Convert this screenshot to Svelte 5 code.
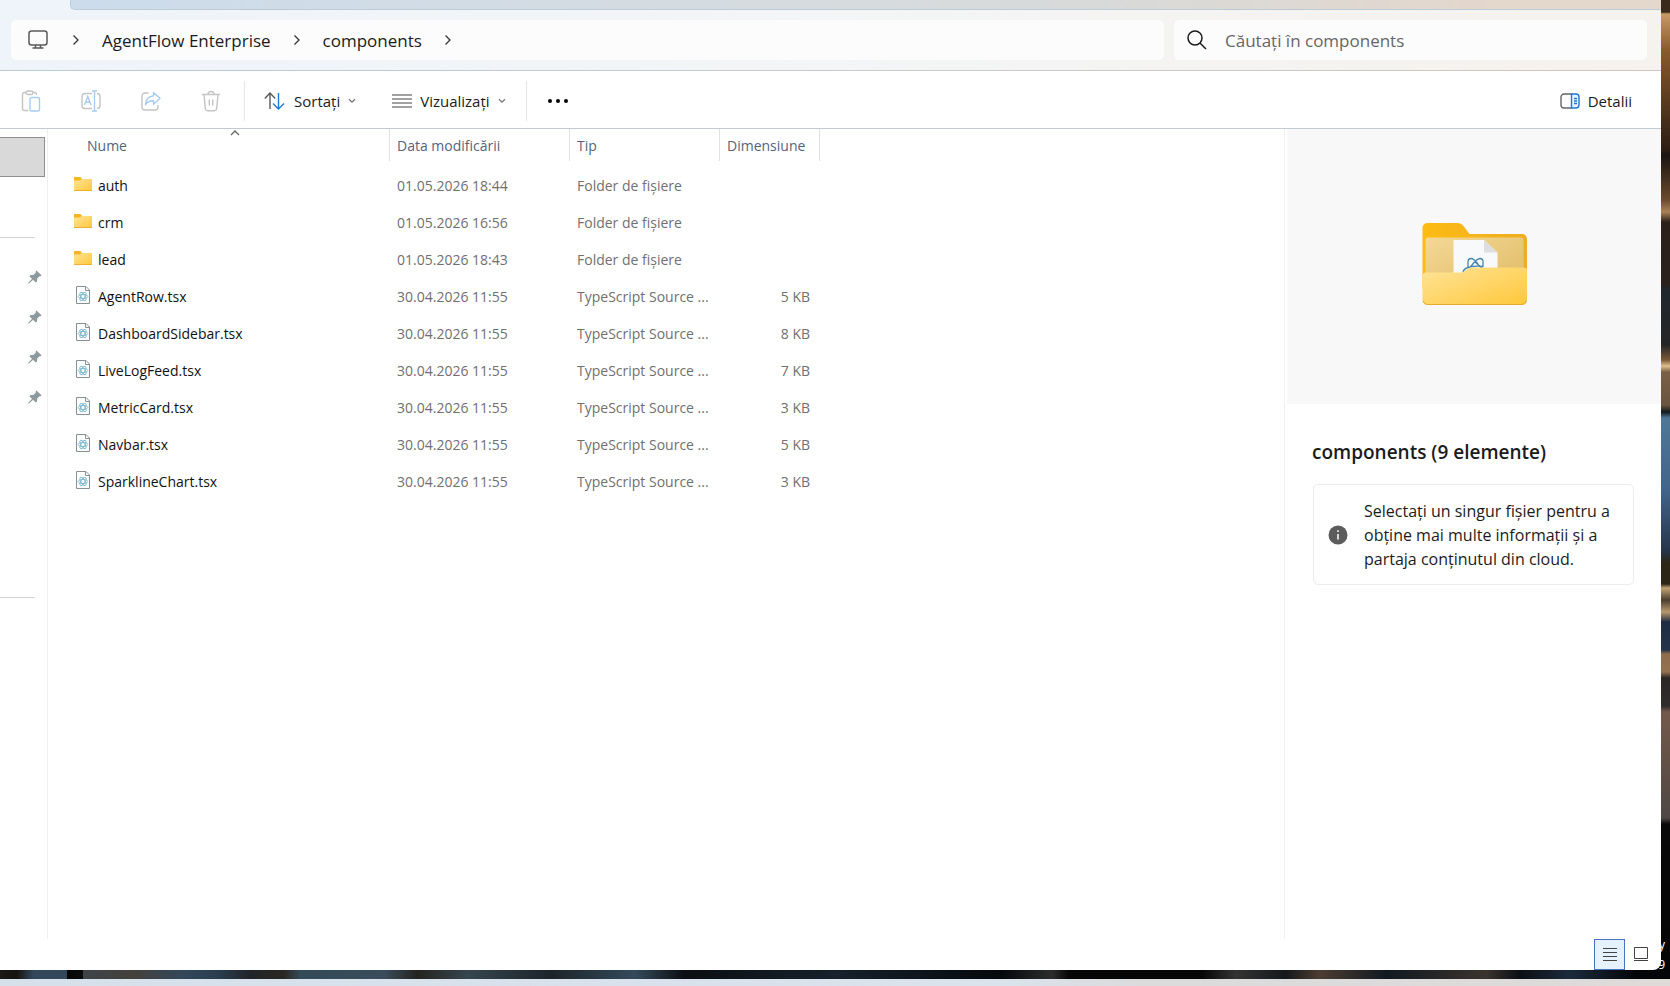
<script lang="ts">
    interface Entry {
        name: string;
        modified: string;
        size?: string;
    }

    const crumbs = ['AgentFlow Enterprise', 'components'];

    const entries: Entry[] = [
        { name: 'auth', modified: '01.05.2026 18:44' },
        { name: 'crm', modified: '01.05.2026 16:56' },
        { name: 'lead', modified: '01.05.2026 18:43' },
        { name: 'AgentRow.tsx', modified: '30.04.2026 11:55', size: '5 KB' },
        { name: 'DashboardSidebar.tsx', modified: '30.04.2026 11:55', size: '8 KB' },
        { name: 'LiveLogFeed.tsx', modified: '30.04.2026 11:55', size: '7 KB' },
        { name: 'MetricCard.tsx', modified: '30.04.2026 11:55', size: '3 KB' },
        { name: 'Navbar.tsx', modified: '30.04.2026 11:55', size: '5 KB' },
        { name: 'SparklineChart.tsx', modified: '30.04.2026 11:55', size: '3 KB' },
    ];

    const pins = [1, 2, 3, 4];

    let search = $state('');
    let view = $state('details');
    let showDetails = $state(true);
</script>

{#snippet chevron()}
    <svg class="chevron" width="8" height="12" viewBox="0 0 8 12"><path d="M1.5 1.5 6 6 1.5 10.5" /></svg>
{/snippet}

{#snippet caret()}
    <svg class="caret" width="8" height="6" viewBox="0 0 8 6"><path d="M1 1.2 4 4.2 7 1.2" /></svg>
{/snippet}

<div class="desktop">
    <div class="window">
        <div class="titlebar"><div class="tabs"></div></div>

        <header class="address-row">
            <nav class="address">
                <button class="crumb-icon" aria-label="Acest PC">
                    <svg width="20" height="20" viewBox="0 0 20 20" fill="none" stroke="#5a5a5a" stroke-width="1.5">
                        <rect x="1" y="1" width="18" height="14" rx="2.5" />
                        <path d="M7.5 15v3M12.5 15v3M4.5 18h11" />
                    </svg>
                </button>
                {@render chevron()}
                {#each crumbs as crumb}
                    <a class="crumb" href="#{crumb}">{crumb}</a>
                    {@render chevron()}
                {/each}
            </nav>
            <label class="search">
                <svg width="20" height="20" viewBox="0 0 20 20" fill="none" stroke="#1b1b1b" stroke-width="1.5">
                    <circle cx="8" cy="8" r="7" />
                    <path d="m13 13 6 6" />
                </svg>
                <input type="text" bind:value={search} placeholder="Căutați în components" aria-label="Căutați în components" />
            </label>
        </header>

        <div class="toolbar">
            <div class="actions">
                <button aria-label="Lipire" disabled>
                    <svg width="20" height="22" viewBox="0 0 20 22" fill="none" stroke="#c4c4c4" stroke-width="1.4">
                        <path d="M7 20.5H3.5a2 2 0 0 1-2-2v-14a2 2 0 0 1 2-2H5M12 2.5h1.5a2 2 0 0 1 2 2V5" />
                        <rect x="5" y="1" width="7" height="3.5" rx="1.7" />
                        <rect x="9" y="7.5" width="9.5" height="13.5" rx="1.8" stroke="#a5cdf2" />
                    </svg>
                </button>
                <button aria-label="Redenumire" disabled>
                    <svg width="20" height="22" viewBox="0 0 20 22" fill="none" stroke="#c4c4c4" stroke-width="1.4">
                        <path d="M11 18.500H4a3 3 0 0 1-3-3v-9a3 3 0 0 1 3-3h7M16 3.500a3 3 0 0 1 3 3v9a3 3 0 0 1-3 3" />
                        <path d="m3.500 15 3.200-8.500L10 15M4.600 12.200h4.200M11 1h5M11 21h5M13.500 1v20" stroke="#a5cdf2" />
                    </svg>
                </button>
                <button aria-label="Partajare" disabled>
                    <svg width="20" height="22" viewBox="0 0 20 22" fill="none" stroke="#c4c4c4" stroke-width="1.4">
                        <path d="M7.500 3H4a3 3 0 0 0-3 3v11a3 3 0 0 0 3 3h10a3 3 0 0 0 3-3v-2" />
                        <path d="M12.500 2.500 19 8.300l-6.500 5.900v-3.500c-4 0-6.500 1-8 4 .3-5.500 3-8.500 8-8.800z" stroke="#a5cdf2" stroke-linejoin="round" />
                    </svg>
                </button>
                <button aria-label="Ștergere" disabled>
                    <svg width="20" height="22" viewBox="0 0 20 22" fill="none" stroke="#c4c4c4" stroke-width="1.4">
                        <path d="M1 4.500h18M7 4.500a3 3 0 0 1 6 0M3 4.500l1.300 14a2.500 2.500 0 0 0 2.400 2.200h6.600a2.500 2.500 0 0 0 2.400-2.200L17 4.500M8.300 9.500v6M11.700 9.500v6" />
                    </svg>
                </button>
            </div>
            <div class="menus">
                <button class="menu">
                    <svg width="22" height="18" viewBox="0 0 22 18" fill="none" stroke-width="1.4">
                        <path d="M6 17V1M.8 6.500 6 1l5.200 5.500" stroke="#5a5a5a" />
                        <path d="M14.500 1v16M9 11.500l5.500 5.500 5.500-5.500" stroke="#1f78d1" />
                    </svg>
                    Sortați {@render caret()}
                </button>
                <button class="menu">
                    <svg width="20" height="14" viewBox="0 0 20 14" stroke="#444" stroke-width="1.2">
                        <path d="M0 1h20M0 5h20M0 9h20M0 13h20" />
                    </svg>
                    Vizualizați {@render caret()}
                </button>
            </div>
            <button class="more" aria-label="Mai multe">
                <svg width="22" height="6" viewBox="0 0 22 6"><circle cx="3" cy="3" r="2" /><circle cx="11" cy="3" r="2" /><circle cx="19" cy="3" r="2" /></svg>
            </button>
            <button class="menu details-toggle" onclick={() => (showDetails = !showDetails)}>
                <svg width="20" height="16" viewBox="0 0 20 16" fill="none" stroke-width="1.4">
                    <path d="M11.500 1H4a3 3 0 0 0-3 3v8a3 3 0 0 0 3 3h7.500" stroke="#666" />
                    <path d="M11.500 1H16a3 3 0 0 1 3 3v8a3 3 0 0 1-3 3h-4.500zM14 5.500h3M14 8h3M14 10.500h3" fill="#e8f3fd" stroke="#1f78d1" />
                </svg>
                Detalii
            </button>
        </div>

        <div class="content">
            <aside class="sidebar">
                <div class="selected"></div>
                <hr />
                <ul class="pins">
                    {#each pins as pin (pin)}
                        <li>
                            <svg width="14" height="14" viewBox="0 0 14 14" fill="#8d999d">
                                <path d="M8.500.5 13.500 5.300 12.700 6.300 11.500 6.200 9.200 8.600 9 11.500 7.800 12.500 5 9.700 1 13.500.3 13.600.4 12.800 4 8.800 1.500 6.200 2.500 5 5.400 4.900 7.800 2.500 7.700 1.300z" />
                            </svg>
                        </li>
                    {/each}
                </ul>
                <hr class="lower" />
            </aside>

            <main class="files">
                <svg class="sort-mark" width="10" height="6" viewBox="0 0 10 6"><path d="M1 5 5 1 9 5" /></svg>
                <table>
                    <thead>
                        <tr>
                            <th class="name"><span>Nume</span></th>
                            <th class="modified"><span>Data modificării</span></th>
                            <th class="type"><span>Tip</span></th>
                            <th class="size"><span>Dimensiune</span></th>
                        </tr>
                    </thead>
                    <tbody>
                        {#each entries as entry (entry.name)}
                            <tr>
                                <td class="name">
                                    <div class="entry">
                                        {#if entry.size}
                                            <svg width="20" height="20" viewBox="0 0 20 20" fill="none">
                                                <path d="M3.500 1.500h9.500l3.500 3.500v13.500h-13z" fill="#fcfdfd" stroke="#8a8f93" />
                                                <path d="M12.500 1.500v4h4" stroke="#8a8f93" />
                                                <g stroke="#6fafc9" stroke-width=".8">
                                                    <ellipse cx="10" cy="11.500" rx="4.800" ry="2" />
                                                    <ellipse cx="10" cy="11.500" rx="4.800" ry="2" transform="rotate(60 10 11.500)" />
                                                    <ellipse cx="10" cy="11.500" rx="4.800" ry="2" transform="rotate(120 10 11.500)" />
                                                </g>
                                            </svg>
                                        {:else}
                                            <svg width="20" height="20" viewBox="0 0 20 20">
                                                <path d="M1 3.500q0-.5.500-.5h6l1.500 2h9.500q.5 0 .5.500V9H1z" fill="#f8b51f" />
                                                <path d="M1 6.500h6L8.500 5h10q.5 0 .5.500v11q0 .5-.5.500h-17q-.5 0-.5-.5z" fill="url(#row-folder)" />
                                                <path d="M1 16.500h18" stroke="#eeb033" />
                                            </svg>
                                        {/if}
                                        {entry.name}
                                    </div>
                                </td>
                                <td>{entry.modified}</td>
                                <td>{entry.size ? 'TypeScript Source ...' : 'Folder de fișiere'}</td>
                                <td class="size">{entry.size ?? ''}</td>
                            </tr>
                        {/each}
                    </tbody>
                </table>
            </main>

            {#if showDetails}
                <aside class="details">
                    <div class="preview">
                        <svg width="106" height="84" viewBox="0 0 106 84">
                            <defs>
                                <linearGradient id="row-folder" x1="0" y1="0" x2="1" y2="1">
                                    <stop offset="0" stop-color="#ffe398" />
                                    <stop offset="1" stop-color="#ffc83a" />
                                </linearGradient>
                                <linearGradient id="folder-back" x1="0" y1="0" x2="1" y2="0">
                                    <stop offset="0" stop-color="#fdbb14" />
                                    <stop offset="1" stop-color="#eeae20" />
                                </linearGradient>
                                <linearGradient id="folder-inner" x1="0" y1="0" x2="1" y2="1">
                                    <stop offset="0" stop-color="#f4d895" />
                                    <stop offset="1" stop-color="#dfbb66" />
                                </linearGradient>
                            </defs>
                            <path d="M.5 6a5 5 0 0 1 5-5H35q4 0 6.500 3l6 8H100a5 5 0 0 1 5 5v50H.5z" fill="url(#folder-back)" />
                            <rect x="3.500" y="15.500" width="98" height="50" rx="2.500" fill="url(#folder-inner)" />
                            <path d="M31.500 18H62l13.500 12.500V60h-44z" fill="#f7f9fb" />
                            <path d="M62 18v12.500h13.500z" fill="#dedede" />
                            <path
                                d="M46 45v-5q0-3.500 3-3.500 3 0 7 5.500M61 45v-5q0-3.500-3-3.500-3 0-8 6.500l-3 3M53 40l7 6M41 50q1-4.500 9-5.500 6-.8 11 0"
                                fill="none"
                                stroke="#4487ad"
                                stroke-width="1.3"
                            />
                            <path d="M.5 54q0-3.500 3.500-3.500h34q3.500 0 6-2.500t6-2.500H102q3 0 3 3V78a5 5 0 0 1-5 5H5.500a5 5 0 0 1-5-5z" fill="url(#row-folder)" />
                            <path d="M1 79q1 3.500 4.500 3.500H100q3.500 0 4.500-3.500" fill="none" stroke="#e6a92f" />
                        </svg>
                    </div>
                    <h2>components (9 elemente)</h2>
                    <div class="notice">
                        <svg width="20" height="20" viewBox="0 0 20 20">
                            <circle cx="10" cy="10" r="9.500" fill="#5c5c5c" />
                            <path d="M10 9v5.500M10 5.300v1.600" stroke="#fff" stroke-width="1.500" />
                        </svg>
                        <p>Selectați un singur fișier pentru a obține mai multe informații și a partaja conținutul din cloud.</p>
                    </div>
                </aside>
            {/if}
        </div>

        <footer class="statusbar">
            <button class:active={view === 'details'} aria-label="Detalii" onclick={() => (view = 'details')}>
                <svg width="16" height="14" viewBox="0 0 16 14"><path d="M1 .5h14M1 4.500h14M1 8.500h14M1 12.500h14" /></svg>
            </button>
            <button class:active={view === 'icons'} aria-label="Pictograme mari" onclick={() => (view = 'icons')}>
                <svg width="16" height="16" viewBox="0 0 16 16"><path d="M1.500.5h13v11h-13zM1 13.500h14" /></svg>
            </button>
        </footer>
    </div>

    <div class="wallpaper"></div>
    <div class="taskbar"></div>
    <span class="clipped upper">y</span>
    <span class="clipped lower">9</span>
</div>

<style>
    :global(body) {
        margin: 0;
    }

    .desktop {
        position: relative;
        min-height: 100vh;
        display: grid;
        grid-template-rows: 1fr 9px 7px;
        overflow: hidden;
        font-family: 'Open Sans', 'Noto Sans', sans-serif;
        font-size: 14px;
        color: #1b1b1b;
        background: linear-gradient(
            #3a2a1c 0,
            #3a2a1c 12px,
            #c79a66 14px,
            #8a5a2c 50px,
            #2c1d14 150px,
            #1a1512 155px,
            #6b4a2c 200px,
            #a98258 212px,
            #2c211a 222px,
            #2a211d 284px,
            #20282e 290px,
            #252526 345px,
            #7a5a38 360px,
            #e0c08c 366px,
            #7a6046 372px,
            #6a543e 405px,
            #101a1c 412px,
            #4e7796 418px,
            #42648a 490px,
            #26364c 550px,
            #2c2617 563px,
            #2c2617 584px,
            #c2a274 588px,
            #4a3f2e 600px,
            #b8996c 612px,
            #1d2c42 622px,
            #24344a 650px,
            #8f6d4c 654px,
            #94714f 672px,
            #2a2725 678px,
            #302d2d 706px,
            #74594a 712px,
            #4e4844 818px,
            #090909 824px,
            #050505 100%
        );
    }

    button {
        display: flex;
        align-items: center;
        justify-content: center;
        padding: 0;
        border: 0;
        background: none;
        color: inherit;
        font: inherit;
    }

    .window {
        position: relative;
        z-index: 1;
        display: flex;
        flex-direction: column;
        margin-right: 9px;
        overflow: hidden;
        background-color: #fff;
        border-radius: 0 0 8px 0;
    }

    .titlebar {
        padding-left: 70px;
        background: linear-gradient(90deg, #eff4fa, #f3f5f6 50%, #f6f2ed);
    }

    .tabs {
        height: 9px;
        border-bottom: 1px solid #bccbd8;
        border-left: 1px solid #bccbd8;
        border-radius: 0 0 0 5px;
        background: linear-gradient(90deg, #ccdcec, #d3dce3 30%, #d8dad9 65%, #e4d7cc 90%);
    }

    .address-row {
        display: flex;
        gap: 10px;
        padding: 10px 14px 10px 11px;
        border-bottom: 1px solid;
        border-image: linear-gradient(90deg, #b9c8d8, #c8cbcc 50%, #d2c6bc) 1;
        background: linear-gradient(90deg, #eff4fa, #f3f5f6 50%, #f6f2ed);
    }

    .address,
    .search {
        display: flex;
        align-items: center;
        height: 40px;
        border-radius: 5px;
        background-color: #fcfcfd;
        font-size: 17px;
    }

    .address {
        flex: 1;
        gap: 22px;
        padding-left: 17px;
    }

    .crumb-icon {
        margin-right: 2px;
    }

    .crumb {
        color: inherit;
        text-decoration: none;
    }

    .chevron,
    .caret,
    .sort-mark {
        fill: none;
        stroke: #333;
        stroke-width: 1.3;
    }

    .caret {
        stroke: #777;
    }

    .search {
        flex: 0 0 473px;
        box-sizing: border-box;
        gap: 18px;
        padding: 0 13px;
    }

    .search input {
        flex: 1;
        padding: 0;
        border: 0;
        outline: 0;
        background: none;
        color: #1b1b1b;
        font: inherit;
    }

    .search input::placeholder {
        color: #666;
        opacity: 1;
    }

    .toolbar {
        display: flex;
        align-items: center;
        height: 55px;
        padding-top: 2px;
        border-bottom: 1px solid #c3c9cf;
        font-size: 15px;
    }

    .actions,
    .menus {
        display: flex;
        align-items: center;
        height: 40px;
        border-right: 1px solid #e6e6e6;
    }

    .actions {
        gap: 40px;
        padding: 0 23px 0 21px;
    }

    .menus {
        gap: 36px;
        padding: 0 20px 0 19px;
    }

    .menu {
        gap: 8px;
    }

    .more {
        padding: 0 20px;
    }

    .details-toggle {
        margin-left: auto;
        padding-right: 29px;
    }

    .content {
        display: flex;
        flex: 1;
    }

    .sidebar {
        width: 47px;
        border-right: 1px solid #f0f0f0;
    }

    .selected {
        height: 38px;
        margin: 8px 2px 0 0;
        border: 1px solid #8f8f8f;
        border-left: 0;
        background-color: #d9d9d9;
    }

    hr {
        height: 1px;
        margin: 60px 12px 0 0;
        border: 0;
        background-color: #d4d4d4;
    }

    hr.lower {
        margin-top: 180px;
    }

    .pins {
        margin: 19px 0 0;
        padding: 0;
        list-style: none;
    }

    .pins li {
        display: flex;
        align-items: center;
        justify-content: flex-end;
        height: 40px;
        padding-right: 5px;
    }

    .files {
        position: relative;
        flex: 1;
    }

    .sort-mark {
        position: absolute;
        top: 1px;
        left: 182px;
        stroke: #666;
    }

    table {
        width: 772px;
        table-layout: fixed;
        border-collapse: collapse;
    }

    th {
        height: 38px;
        padding: 0;
        vertical-align: top;
        color: #56637c;
        font-weight: 400;
        text-align: left;
    }

    th span {
        display: block;
        height: 32px;
        padding-left: 7px;
        border-right: 1px solid #e2e2e2;
        line-height: 34px;
    }

    th.name {
        width: 342px;
    }

    th.name span {
        padding-left: 39px;
    }

    th.modified {
        width: 180px;
    }

    th.type {
        width: 150px;
    }

    td {
        height: 37px;
        padding: 0 10px 0 7px;
        color: #707070;
        white-space: nowrap;
    }

    td.name {
        padding-left: 25px;
        color: #111;
    }

    td.size {
        text-align: right;
    }

    .entry {
        display: flex;
        align-items: center;
        gap: 5px;
    }

    .entry svg {
        margin-bottom: 3px;
    }

    .details {
        width: 374px;
        padding-left: 2px;
        border-left: 1px solid #f0f0f0;
    }

    .preview {
        display: flex;
        justify-content: center;
        height: 182px;
        padding: 93px 0 0 1px;
        background-color: #f8f8f8;
    }

    h2 {
        margin: 36px 25px 20px;
        font-size: 19px;
        font-weight: 600;
        line-height: 24px;
    }

    .notice {
        display: flex;
        align-items: center;
        gap: 16px;
        margin: 0 27px 0 26px;
        padding: 14px 14px 13px;
        border: 1px solid #ececec;
        border-radius: 5px;
    }

    .notice svg {
        flex: none;
    }

    .notice p {
        margin: 0;
        font-size: 16px;
        line-height: 24px;
    }

    .statusbar {
        display: flex;
        justify-content: flex-end;
        padding-right: 5px;
    }

    .statusbar button {
        box-sizing: border-box;
        width: 31px;
        height: 31px;
        border: 1px solid transparent;
    }

    .statusbar .active {
        border-color: #4674c0;
        background-color: #e5f2fb;
    }

    .statusbar path {
        fill: none;
        stroke: #444;
    }

    .wallpaper {
        background: linear-gradient(
            90deg,
            #1c1916 0,
            #14130f 1%,
            #33475a 2%,
            #34475a 4%,
            #050707 4%,
            #0b0b0b 5%,
            #3e4347 5%,
            #43403c 8%,
            #33475a 11%,
            #2b3e50 13%,
            #202428 15%,
            #2b2722 17%,
            #344a58 18%,
            #3a4c5b 23%,
            #24241f 25%,
            #36454e 28%,
            #1c2429 33%,
            #34495a 38%,
            #0b0e12 41%,
            #16212b 50%,
            #05080c 60%,
            #2c2c2c 63%,
            #060606 64%,
            #060606 72%,
            #333 74%,
            #15171a 77%,
            #4c3d33 79%,
            #111920 83%,
            #3a332e 89%,
            #0b0f14 91%,
            #1b2a3b 94%,
            #030509 98%
        );
    }

    .taskbar {
        background: linear-gradient(90deg, #d6e0eb, #dae3ec 60%, #dbdbdc 68%, #dedbd9);
    }

    /* desktop icon captions that stick out past the window */
    .clipped {
        position: absolute;
        right: 5px;
        color: #fff;
        font-size: 12px;
        line-height: 20px;
    }

    .clipped.upper {
        bottom: 31px;
    }

    .clipped.lower {
        bottom: 11px;
    }
</style>
